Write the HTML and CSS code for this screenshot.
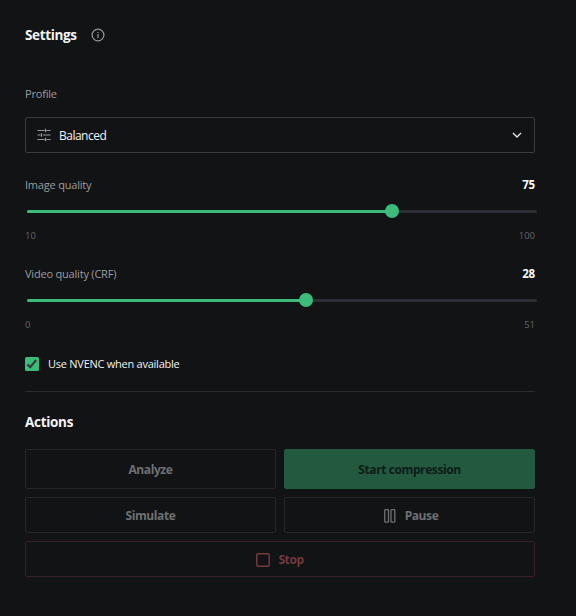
FILE: index.html
```html
<!DOCTYPE html>
<html lang="en">
<head>
<meta charset="utf-8">
<title>Settings</title>
<link rel="stylesheet" href="styles.css">
</head>
<body>
<main class="panel">
  <header class="header">
    <h2 class="title settings-title">Settings</h2>
    <svg class="info" width="14" height="14" viewBox="0 0 14 14" fill="none" stroke="currentColor" stroke-width="1.2"><circle cx="7" cy="7" r="5.9"/><path d="M7 6v4M7 4v1.1"/></svg>
  </header>
  <div class="label profile-label"><span>Profile</span></div>
  <div class="select">
    <svg class="tune" width="14" height="14" viewBox="0 0 14 14" fill="none" stroke="currentColor" stroke-width="1.2"><path d="M.5 2.5h7M9.5 2.5h4M8.5.7v3.6M.5 7h3M4.5 5.2v3.6M6 7h7.5M.5 11.5h7M9.5 11.5h4M8.5 9.7v3.6"/></svg>
    <span class="select-value">Balanced</span>
    <svg class="chevron" width="10" height="8" viewBox="0 0 10 8" fill="none" stroke="currentColor" stroke-width="1.4"><path d="M1 2l4 4 4-4"/></svg>
  </div>
  <section class="field">
    <div class="row label"><span>Image quality</span><b class="value">75</b></div>
    <div class="slider"><div class="fill" style="width:365px"></div><div class="thumb"></div></div>
    <div class="row range"><span>10</span><span>100</span></div>
  </section>
  <section class="field">
    <div class="row label"><span>Video quality (CRF)</span><b class="value">28</b></div>
    <div class="slider"><div class="fill" style="width:279px"></div><div class="thumb"></div></div>
    <div class="row range"><span>0</span><span>51</span></div>
  </section>
  <div class="check">
    <svg width="14" height="14" viewBox="0 0 14 14"><rect width="14" height="14" rx="1.5" fill="#3dbb7a"/><path d="M2.5 7.4l2.7 2.7L11.2 3" fill="none" stroke="#2f3d38" stroke-width="2.1"/></svg>
    <span>Use NVENC when available</span>
  </div>
  <h2 class="title actions-title">Actions</h2>
  <div class="actions">
    <button class="button"><span>Analyze</span></button>
    <button class="button primary"><span>Start compression</span></button>
    <button class="button"><span>Simulate</span></button>
    <button class="button pause"><svg width="12" height="14" viewBox="0 0 12 14" fill="none" stroke="currentColor" stroke-width="1.3"><rect x=".7" y=".7" width="3.8" height="12.4" rx=".7"/><rect x="7" y=".7" width="3.8" height="12.4" rx=".7"/></svg><span>Pause</span></button>
    <button class="button stop"><svg width="14" height="14" viewBox="0 0 14 14" fill="none" stroke="currentColor" stroke-width="1.5"><rect x=".8" y=".8" width="12.4" height="12.4" rx="1"/></svg><span>Stop</span></button>
  </div>
</main>
</body>
</html>
```
FILE: styles.css
```css
* { box-sizing: border-box; }
body {
  margin: 0;
  background: #111315;
  color: #f2f4f5;
  font: 11px/16px "Open Sans", "Noto Sans", sans-serif;
}
.panel { width: 576px; height: 616px; padding: 25px 41px 0 25px; white-space: nowrap; }
.header { display: flex; align-items: center; height: 20px; }
.title { margin: 0; font-size: 13.5px; line-height: 20px; font-weight: 700; }
.settings-title { width: 66px; letter-spacing: -.35px; }
.info { color: #989b9d; }
.label { height: 16px; color: #9a9d9f; letter-spacing: -.2px; }
.profile-label { margin-top: 41px; }
.select {
  display: flex;
  align-items: center;
  height: 36px;
  margin-top: 15px;
  padding: 0 12px 0 11px;
  border: 1px solid #3a3c3e;
  border-radius: 2px;
}
.select-value { padding-top: 1px; font-size: 12px; letter-spacing: -.5px; }
.tune { margin-right: 8px; color: #999b9d; }
.chevron { margin-left: auto; color: #e4e6e7; }
.field { height: 65px; margin-top: 24px; }
.row { display: flex; justify-content: space-between; align-items: center; }
.value { color: #f7f8f9; font-size: 11.5px; }
.slider {
  display: flex;
  align-items: center;
  width: 510px;
  height: 3px;
  margin: 17px 0 16px 2px;
  border-radius: 2px;
  background: #2b2f34;
}
.fill { height: 3px; border-radius: 2px; background: #3dbb7a; }
.thumb { flex: none; width: 14px; height: 14px; margin: -1px 0 0 -7px; border-radius: 50%; background: #3dbb7a; }
.range { height: 14px; color: #626669; font-size: 9.5px; line-height: 14px; }
.check { display: flex; align-items: center; gap: 9px; height: 16px; margin-top: 25px; letter-spacing: -.25px; }
.actions-title { margin-top: 19px; padding-top: 20px; border-top: 1px solid #292b2d; letter-spacing: -.3px; }
.actions { display: grid; grid-template-columns: 251px 251px; grid-template-rows: 40px 36px 36px; gap: 8px; margin-top: 17px; }
.button {
  display: flex;
  align-items: center;
  justify-content: center;
  gap: 8px;
  padding: 1px 0 0;
  border: 1px solid #242628;
  border-radius: 2px;
  background: transparent;
  color: #6e7072;
  font: 700 12px/16px "Open Sans", "Noto Sans", sans-serif;
  letter-spacing: -.4px;
}
.primary { border-color: #22593f; background: #22593f; color: #0c1d17; }
.pause { gap: 9px; padding-left: 3px; }
.stop { grid-column: 1 / -1; border-color: #372126; color: #74383d; }
```
